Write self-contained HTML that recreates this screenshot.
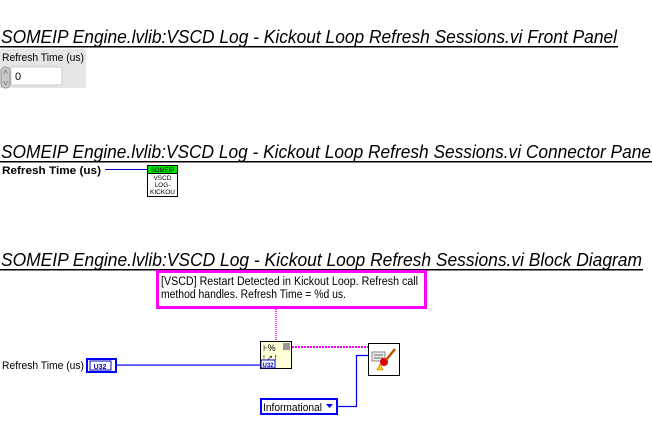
<!DOCTYPE html>
<html><head><meta charset="utf-8"><style>
html,body{margin:0;padding:0;background:#fff;width:652px;height:440px;overflow:hidden}
svg{display:block}
text{font-family:"Liberation Sans",sans-serif}
</style></head><body>
<svg width="652" height="440" xmlns="http://www.w3.org/2000/svg">
<g font-style="italic" font-size="18" fill="#000">
<text x="1" y="43" textLength="616" lengthAdjust="spacingAndGlyphs">SOMEIP Engine.lvlib:VSCD Log - Kickout Loop Refresh Sessions.vi Front Panel</text>
<text x="1" y="158" textLength="650" lengthAdjust="spacingAndGlyphs">SOMEIP Engine.lvlib:VSCD Log - Kickout Loop Refresh Sessions.vi Connector Pane</text>
<text x="1" y="266" textLength="641" lengthAdjust="spacingAndGlyphs">SOMEIP Engine.lvlib:VSCD Log - Kickout Loop Refresh Sessions.vi Block Diagram</text>
</g>
<rect x="0" y="46" width="618" height="1.5" fill="#000"/>
<rect x="0" y="161" width="652" height="1.5" fill="#000"/>
<rect x="0" y="269" width="643" height="1.5" fill="#000"/>

<rect x="0" y="49" width="86" height="39" fill="#e6e6e6"/>
<text x="2" y="61" font-size="11" fill="#000" textLength="82" lengthAdjust="spacingAndGlyphs">Refresh Time (us)</text>
<rect x="1" y="67" width="9" height="21" rx="4" fill="#c8c8c8" stroke="#999"/>
<path d="M3.5 74 L5.5 70 L7.5 74 M3.5 81 L5.5 85 L7.5 81" stroke="#777" fill="none" stroke-width="0.8"/>
<rect x="11" y="67" width="51" height="18" fill="#fff" stroke="#ccc"/>
<text x="15" y="80" font-size="11" fill="#000">0</text>

<text x="2" y="174" font-size="11" font-weight="bold" fill="#000" textLength="99" lengthAdjust="spacingAndGlyphs">Refresh Time (us)</text>
<rect x="105" y="169" width="42" height="1" fill="#0000c0"/>
<rect x="147.5" y="165.5" width="30" height="31" fill="#fff" stroke="#000"/>
<rect x="148" y="166" width="29" height="7" fill="#00e000"/>
<rect x="148" y="173" width="29" height="1" fill="#000"/>
<text x="162.5" y="172" font-size="6" text-anchor="middle" font-family="DejaVu Sans Mono,monospace">SOMEIP</text>
<g font-size="6.5" text-anchor="middle" font-family="DejaVu Sans Mono,monospace">
<text x="162.5" y="180">VSCD</text><text x="162.5" y="187">LOG-</text><text x="162.5" y="194">KICKOU</text></g>

<rect x="157.5" y="271.5" width="268" height="36" fill="#fff" stroke="#ff00ff" stroke-width="3"/>
<text x="161" y="285" font-size="11.5" fill="#000" textLength="257" lengthAdjust="spacingAndGlyphs">[VSCD] Restart Detected in Kickout Loop. Refresh call</text>
<text x="161" y="298" font-size="11.5" fill="#000" textLength="185" lengthAdjust="spacingAndGlyphs">method handles. Refresh Time = %d us.</text>
<line x1="276" y1="309" x2="276" y2="341" stroke="#ff00ff" stroke-width="1.5" stroke-dasharray="1,1"/>
<path d="M292 347 L368 347" stroke="#ff00ff" stroke-width="2" stroke-dasharray="2,1"/>

<text x="2" y="369" font-size="11" fill="#000" textLength="82" lengthAdjust="spacingAndGlyphs">Refresh Time (us)</text>
<rect x="87" y="359" width="29" height="13" fill="#fff" stroke="#0000ff" stroke-width="2"/>
<rect x="90" y="361" width="21" height="9" fill="#fff" stroke="#0000c0"/>
<text x="100" y="369" font-size="7" font-weight="bold" fill="#0000c0" text-anchor="middle">U32</text>
<rect x="117" y="364.5" width="143" height="1.2" fill="#0000ff"/>

<rect x="260.5" y="341.5" width="31" height="27" fill="#ffffd8" stroke="#000"/>
<text x="263" y="351" font-size="9" fill="#000">⊦%</text>
<rect x="283" y="343" width="7" height="7" fill="#999"/>
<text x="263" y="360" font-size="7" fill="#000">!  ↗ !</text>
<rect x="261" y="360" width="14" height="8" fill="#fff" stroke="#0000c0"/>
<text x="268" y="367" font-size="6" font-weight="bold" fill="#0000c0" text-anchor="middle">U32</text>

<rect x="368.5" y="343.5" width="31" height="32" fill="#fff" stroke="#000"/>
<rect x="372" y="352" width="13" height="9" fill="#eee" stroke="#888"/>
<path d="M374 355h9M374 358h9" stroke="#666"/>
<circle cx="384" cy="362" r="4" fill="#e00000"/>
<path d="M386 360 L395 349" stroke="#c05000" stroke-width="2.5"/>
<path d="M377 370 L380 364 L383 370Z" fill="#ffd000" stroke="#a08000" stroke-width="0.6"/>

<path d="M337 406.5 H356.5 V355.5 H368" stroke="#0000ff" stroke-width="1.2" fill="none"/>
<rect x="261" y="399" width="76" height="15" fill="#fff" stroke="#0000ff" stroke-width="2"/>
<text x="263" y="411" font-size="11" fill="#000" textLength="59" lengthAdjust="spacingAndGlyphs">Informational</text>
<path d="M326 404 h7 l-3.5 4z" fill="#0000ff"/>
</svg>
</body></html>
